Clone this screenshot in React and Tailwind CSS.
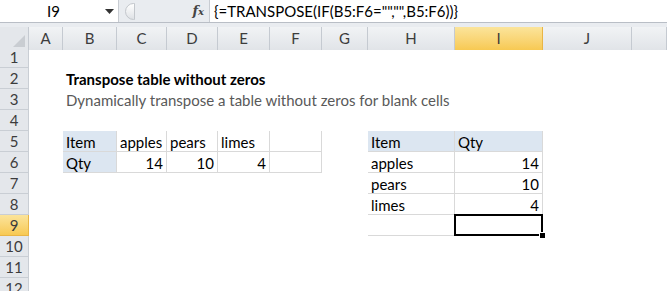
import React from "react";

const cols = [
  { key: "A", w: 34 },
  { key: "B", w: 54 },
  { key: "C", w: 50 },
  { key: "D", w: 51 },
  { key: "E", w: 52 },
  { key: "F", w: 52 },
  { key: "G", w: 46 },
  { key: "H", w: 87 },
  { key: "I", w: 88 },
  { key: "J", w: 89 },
  { key: "", w: 40 },
];

const gridCols =
  "grid grid-cols-[29px_34px_54px_50px_51px_52px_52px_46px_87px_88px_89px_1fr]";

// cell contents by address
const cells = {
  B2: { v: "Transpose table without zeros", cls: "font-bold text-black whitespace-nowrap" },
  B3: { v: "Dynamically transpose a table without zeros for blank cells", cls: "text-[#595959] whitespace-nowrap" },
  B5: { v: "Item", head: true },
  C5: { v: "apples", t: true },
  D5: { v: "pears", t: true },
  E5: { v: "limes", t: true },
  F5: { v: "", t: true },
  B6: { v: "Qty", head: true },
  C6: { v: "14", t: true, num: true },
  D6: { v: "10", t: true, num: true },
  E6: { v: "4", t: true, num: true },
  F6: { v: "", t: true },
  H5: { v: "Item", head: true },
  I5: { v: "Qty", head: true },
  H6: { v: "apples", t: true },
  I6: { v: "14", t: true, num: true },
  H7: { v: "pears", t: true },
  I7: { v: "10", t: true, num: true },
  H8: { v: "limes", t: true },
  I8: { v: "4", t: true, num: true },
  H9: { v: "", t: true },
  I9: { v: "", t: true, sel: true },
};

function Cell({ addr }) {
  const c = cells[addr];
  if (!c) return <div className="h-[21px]" />;
  const boxed = c.t || c.head;
  return (
    <div
      className={`relative h-[21px] flex items-center px-[3px] leading-none ${
        boxed ? "border-r border-b border-[#d9d9d9]" : ""
      } ${c.head ? "bg-[#dce6f1]" : ""} ${c.num ? "justify-end" : ""} ${
        c.sel ? "z-10" : ""
      } ${c.cls || "text-black"}`}
    >
      <span className="relative top-[1px]">{c.v}</span>
      {c.sel && (
        <>
          <div className="absolute -left-[1px] -top-[1px] -right-[1px] -bottom-[1px] border-2 border-black" />
          <div className="absolute -right-[4px] -bottom-[4px] w-[7px] h-[7px] bg-black border border-white" />
        </>
      )}
    </div>
  );
}

function FormulaBar() {
  return (
    <div className="flex h-[23px] bg-white border-b border-[#b9bec6]">
      <div className="w-[118px] flex items-center">
        <span className="flex-1 text-center text-[15px] pl-[2px]">I9</span>
        <svg width="9" height="5" viewBox="0 0 9 5" className="mr-[4px]">
          <path d="M0 0h9L4.5 5z" fill="#333" />
        </svg>
      </div>
      <div className="w-[91px] bg-[#e9ecf0] border-l border-[#c8ccd2] flex items-center relative">
        <div className="ml-[6px] w-[10px] h-[17px] rounded-l-full border border-[#c3c7cc] bg-gradient-to-b from-white to-[#dfe2e6]" />
        <span className="ml-auto mr-[5px] font-['DejaVu_Serif',serif] italic font-bold text-[13px] text-[#444]">
          f<span className="text-[10px]">x</span>
        </span>
      </div>
      <div className="flex-1 flex items-center border-l border-[#c8ccd2] pl-[4px] text-[15px] whitespace-nowrap">
        {'{=TRANSPOSE(IF(B5:F6="","",B5:F6))}'}
      </div>
    </div>
  );
}

function ColHeader() {
  return (
    <div className={`${gridCols} h-[20px] border-b border-[#9ea6b0]`}>
      <div className="relative bg-[#e4e7eb] border-r border-[#c5cad1]">
        <svg width="12" height="12" viewBox="0 0 12 12" className="absolute right-[3px] bottom-[3px]">
          <path d="M12 0V12H0z" fill="#c9cdd2" />
        </svg>
      </div>
      {cols.map((c, i) => (
        <div
          key={i}
          className={`flex items-center justify-center text-[15px] border-r ${
            c.key === "I"
              ? "bg-gradient-to-b from-[#fbe49a] to-[#f7c952] border-[#e9b545] text-[#3c3c3c]"
              : "bg-gradient-to-b from-[#f1f3f5] to-[#e1e4e8] border-[#c5cad1] text-[#3c3c3c]"
          }`}
        >
          {c.key}
        </div>
      ))}
    </div>
  );
}

export default function App() {
  const rows = Array.from({ length: 12 }, (_, i) => i + 1);
  return (
    <div className="w-[667px] h-[291px] overflow-hidden bg-white font-['Lato',sans-serif] text-[15px] text-black">
      <FormulaBar />
      <div className="h-[4px] bg-[#e9ecf0]" />
      <ColHeader />
      {rows.map((r) => (
        <div key={r} className={gridCols}>
          <div
            className={`h-[21px] flex items-center justify-center text-[15px] border-r border-b ${
              r === 9
                ? "bg-gradient-to-b from-[#fbe49a] to-[#f7c952] border-[#e9b545]"
                : "bg-[#e4e7eb] border-[#c9ced4]"
            } text-[#3c3c3c]`}
          >
            {r}
          </div>
          {cols.map((c, i) => (
            <Cell key={i} addr={`${c.key}${r}`} />
          ))}
        </div>
      ))}
    </div>
  );
}
